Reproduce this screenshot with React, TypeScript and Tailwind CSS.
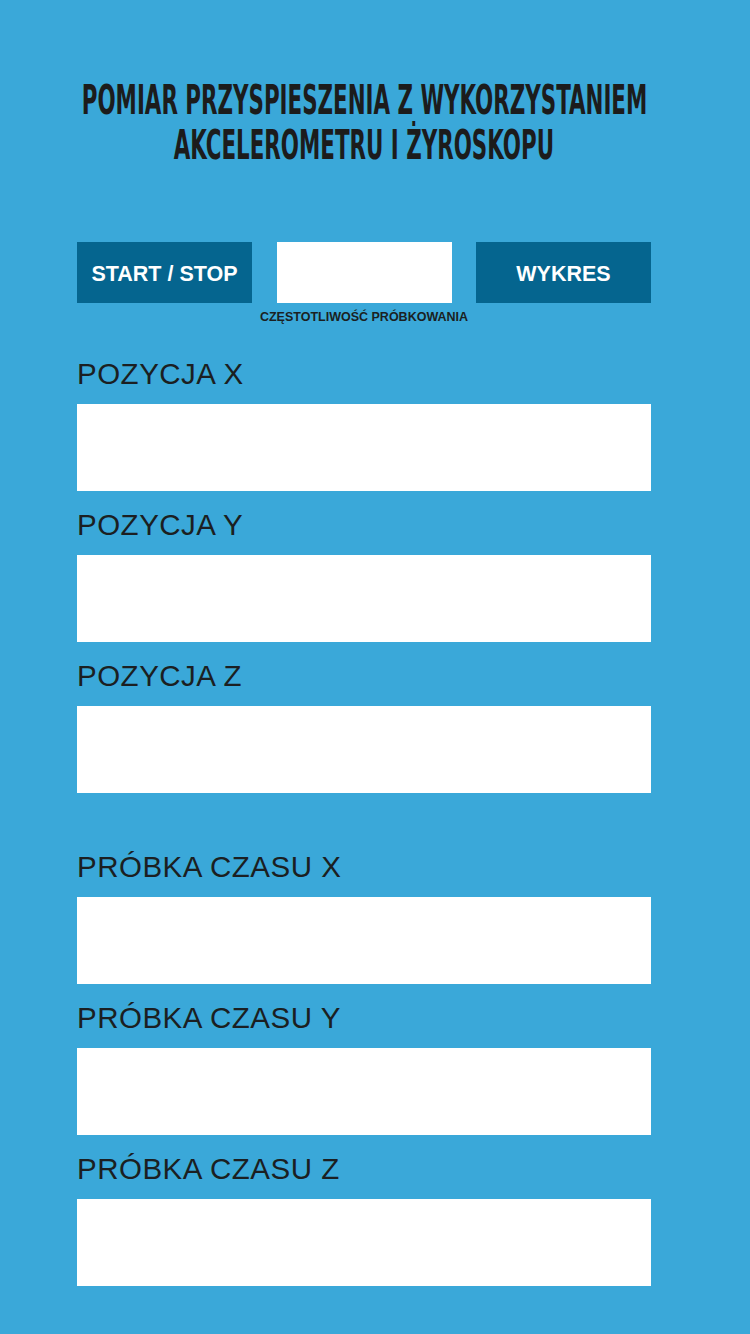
const fields = ["POZYCJA X", "POZYCJA Y", "POZYCJA Z"];
const samples = ["PRÓBKA CZASU X", "PRÓBKA CZASU Y", "PRÓBKA CZASU Z"];

const Field = ({ label }: { label: string }) => (
  <div>
    <div className="h-[51px] text-[29.5px] leading-[47px] text-[#1b1f22] tracking-[0.5px]">
      {label}
    </div>
    <div className="mt-[3px] h-[87px] bg-white" />
  </div>
);

const App = () => {
  return (
    <div className="min-h-[1334px] w-[750px] bg-[#3aa8d9] font-['Liberation_Sans',sans-serif]">
      <div className="ml-[77px] w-[574px] pt-[78px]">
        <h1 className="flex flex-col items-center text-[41px] leading-[45px] font-bold text-[#1c1c1c] font-['DejaVu_Sans_Condensed','DejaVu_Sans',sans-serif]">
          <span className="whitespace-nowrap scale-x-[0.58]">POMIAR PRZYSPIESZENIA Z WYKORZYSTANIEM</span>
          <span className="whitespace-nowrap scale-x-[0.58]">AKCELEROMETRU I ŻYROSKOPU</span>
        </h1>

        <div className="mt-[74px] flex justify-between">
          <button className="h-[61px] w-[175px] bg-[#05658f] pt-[3px] text-[21.5px] font-bold text-white">
            START / STOP
          </button>
          <div className="flex w-[175px] flex-col items-center">
            <div className="h-[61px] w-full bg-white" />
            <div className="mt-[5px] whitespace-nowrap text-[12.5px] font-bold text-[#1b1f22]">
              CZĘSTOTLIWOŚĆ PRÓBKOWANIA
            </div>
          </div>
          <button className="h-[61px] w-[175px] bg-[#05658f] pt-[3px] text-[21.5px] font-bold text-white">
            WYKRES
          </button>
        </div>

        <div className="mt-[23px] flex flex-col gap-[10px]">
          {fields.map((f) => (
            <Field key={f} label={f} />
          ))}
        </div>

        <div className="mt-[50px] flex flex-col gap-[10px]">
          {samples.map((f) => (
            <Field key={f} label={f} />
          ))}
        </div>
      </div>
    </div>
  );
};

export default App;
